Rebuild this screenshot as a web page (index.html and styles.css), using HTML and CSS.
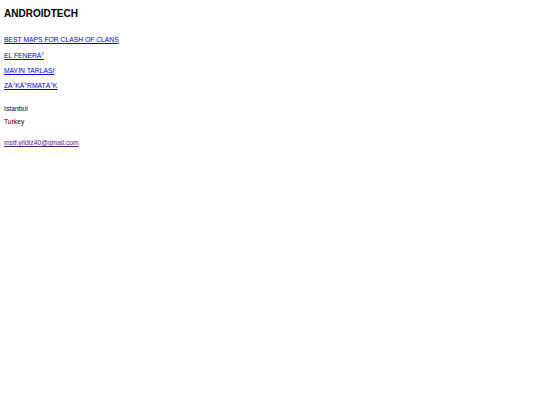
FILE: index.html
```html
<!DOCTYPE html>
<html lang="en">
<head>
  <meta charset="UTF-8">
  <title>ANDROIDTECH</title>
  <link rel="stylesheet" href="styles.css">
</head>
<body>
  <h1 class="site-title">ANDROIDTECH</h1>

  <ul class="apps">
    <li><a href="#maps">BEST MAPS FOR CLASH OF CLANS</a></li>
    <li><a href="#fener">EL FENERÄ°</a></li>
    <li><a href="#mayin">MAYIN TARLASI</a></li>
    <li><a href="#zikir">ZÄ°KÄ°RMATÄ°K</a></li>
  </ul>

  <div class="address">
    <p>Istanbul</p>
    <p>Turkey</p>
  </div>

  <p class="contact"><a class="visited" href="#mail">mstf.yildiz40@gmail.com</a></p>
</body>
</html>
```

FILE: styles.css
```css
body {
  margin: 0;
  padding: 0 4px;
  font-family: "Liberation Sans", Arial, sans-serif;
  font-size: 6.75px;
  color: #000;
  background: #fff;
}

.site-title {
  margin: 8px 0 12.35px;
  font-size: 10px;
  line-height: 12px;
  font-weight: bold;
}

.apps {
  list-style: none;
  margin: 0;
  padding: 0;
}
.apps li {
  line-height: 15.3px;
}

a {
  color: #0000ee;
}
a.visited {
  color: #551a8b;
}

.address {
  margin: 8.45px 0 7.5px;
}
.address p {
  margin: 0;
  line-height: 13.5px;
}

.contact {
  margin: 0;
  line-height: 14px;
}
```
